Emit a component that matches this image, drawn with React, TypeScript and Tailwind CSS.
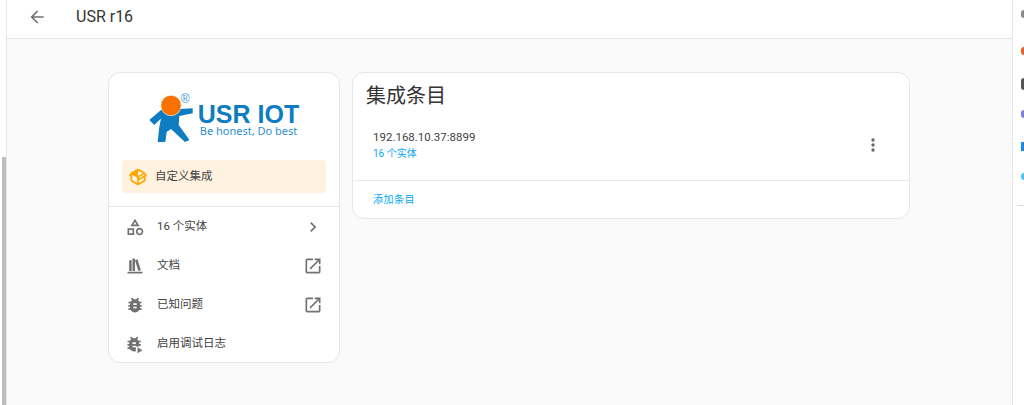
const FONT = "font-['Roboto','Noto_Sans_CJK_SC',sans-serif]";

const Icon = ({ d, className }: { d: string; className: string }) => (
  <svg viewBox="0 0 24 24" className={className} fill="currentColor">
    <path d={d} />
  </svg>
);

const ARROW_LEFT = "M20,11V13H8L13.5,18.5L12.08,19.92L4.16,12L12.08,4.08L13.5,5.5L8,11H20Z";
const PACKAGE = "M2,10.96C1.5,10.68 1.35,10.07 1.63,9.59L3.13,7C3.24,6.8 3.41,6.66 3.6,6.58L11.43,2.18C11.59,2.06 11.79,2 12,2C12.21,2 12.41,2.06 12.57,2.18L20.47,6.62C20.66,6.72 20.82,6.88 20.91,7.08L22.36,9.6C22.64,10.08 22.47,10.69 22,10.96L21,11.54V16.5C21,16.88 20.79,17.21 20.47,17.38L12.57,21.82C12.41,21.94 12.21,22 12,22C11.79,22 11.59,21.94 11.43,21.82L3.53,17.38C3.21,17.21 3,16.88 3,16.5V10.96C2.7,11.13 2.32,11.14 2,10.96M12,4.15V4.15L12,10.85V10.85L17.96,7.5L12,4.15M5,15.91L11,19.29V12.58L5,9.21V15.91M19,15.91V12.69L14,15.59C13.67,15.77 13.3,15.76 13,15.6V19.29L19,15.91M13.85,13.36L20.13,9.73L19.55,8.72L13.27,12.35L13.85,13.36Z";
const SHAPE = "M11,13.5V21.5H3V13.5H11M9,15.5H5V19.5H9V15.5M12,2L17.5,11H6.5L12,2M12,5.86L10.08,9H13.92L12,5.86M17.5,13C20,13 22,15 22,17.5C22,20 20,22 17.5,22C15,22 13,20 13,17.5C13,15 15,13 17.5,13M17.5,15A2.5,2.5 0 0,0 15,17.5A2.5,2.5 0 0,0 17.5,20A2.5,2.5 0 0,0 20,17.5A2.5,2.5 0 0,0 17.5,15Z";
const BOOKSHELF = "M9 3V18H12V3H9M12 5L16 18L19 17L15 4L12 5M5 5V18H8V5H5M3 19V21H21V19H3Z";
const BUG = "M14,12H10V10H14M14,16H10V14H14M20,8H17.19C16.74,7.22 16.12,6.55 15.37,6.04L17,4.41L15.59,3L13.42,5.17C12.96,5.06 12.5,5 12,5C11.5,5 11.04,5.06 10.59,5.17L8.41,3L7,4.41L8.62,6.04C7.88,6.55 7.26,7.22 6.81,8H4V10H6.09C6.04,10.33 6,10.66 6,11V12H4V14H6V15C6,15.34 6.04,15.67 6.09,16H4V18H6.81C7.85,19.79 9.78,21 12,21C14.22,21 16.15,19.79 17.19,18H20V16H17.91C17.96,15.67 18,15.34 18,15V14H20V12H18V11C18,10.66 17.96,10.33 17.91,10H20V8Z";
const BUG_PLAY = "M13,12H9V10H13M13,16H9V14H13M19,8H16.19C15.74,7.22 15.12,6.55 14.37,6.04L16,4.41L14.59,3L12.42,5.17C11.96,5.06 11.5,5 11,5C10.5,5 10.04,5.06 9.59,5.17L7.41,3L6,4.41L7.62,6.04C6.88,6.55 6.26,7.22 5.81,8H3V10H5.09C5.04,10.33 5,10.66 5,11V12H3V14H5V15C5,15.34 5.04,15.67 5.09,16H3V18H5.81C6.85,19.79 8.78,21 11,21C11.7,21 12.37,20.88 13,20.65V15H17V14H19V12H17V11C17,10.66 16.96,10.33 16.91,10H19V8M15,16V23L21,19.5L15,16Z";
const OPEN_NEW = "M14,3V5H17.59L7.76,14.83L9.17,16.24L19,6.41V10H21V3M19,19H5V5H12V3H5C3.89,3 3,3.9 3,5V19A2,2 0 0,0 5,21H19A2,2 0 0,0 21,19V12H19V19Z";
const CHEVRON = "M8.59,16.58L13.17,12L8.59,7.41L10,6L16,12L10,18L8.59,16.58Z";
const DOTS = "M12,16A2,2 0 0,1 14,18A2,2 0 0,1 12,20A2,2 0 0,1 10,18A2,2 0 0,1 12,16M12,10A2,2 0 0,1 14,12A2,2 0 0,1 12,14A2,2 0 0,1 10,12A2,2 0 0,1 12,10M12,4A2,2 0 0,1 14,6A2,2 0 0,1 12,8A2,2 0 0,1 10,6A2,2 0 0,1 12,4Z";

const links = [
  { icon: SHAPE, label: "16 个实体", end: CHEVRON },
  { icon: BOOKSHELF, label: "文档", end: OPEN_NEW },
  { icon: BUG, label: "已知问题", end: OPEN_NEW },
  { icon: BUG_PLAY, label: "启用调试日志" },
];

// only a sliver of each icon of the right sidebar is in the window
const sliverIcons = [
  "mt-[10px] h-[8px] bg-[#8a8a8a] rounded-l",
  "mt-[29px] h-[8px] bg-[#e2622a] rounded-l-sm",
  "mt-[23px] h-[12px] bg-[#555555] rounded-l",
  "mt-[20px] h-[8px] bg-[#7b7fe8] rounded-l-sm",
  "mt-[24px] h-[9px] bg-[#1e88e5]",
  "mt-[22px] h-[7px] bg-[#4fc3f7] rounded-l",
];

const Logo = () => (
  <div className="flex justify-center h-[50px]">
    <svg viewBox="0 0 49 50" className="w-[49px] h-[50px] shrink-0">
      <path fill="#0d7cc1" d="M0.3 25 L12 15 L30 14 L43.7 13.3 L43.7 18.3 L30.3 21 L29.7 30 L40.5 45 L36 47 L22 34 L17.7 37 L16.3 47 L8.7 47 L10.3 32 L12 23.5 L5.3 30 Z" />
      <circle cx="22" cy="10.5" r="10.2" fill="#fb7100" stroke="#ffffff" strokeWidth="0.6" />
    </svg>
    <div className="flex flex-col relative">
      <span className="absolute left-[-17px] top-[-3px] text-[12px] leading-[14px] text-[#3d9bd6] font-['Liberation_Sans',sans-serif]">®</span>
      <span className="mt-[9px] text-[25px] leading-[20px] font-bold text-[#0d7cc1] whitespace-nowrap font-['Liberation_Sans',sans-serif]">USR IOT</span>
      <span className="mt-[2px] ml-[2px] text-[11px] leading-[10px] text-[#2d8fd0] whitespace-nowrap font-['Noto_Sans',sans-serif]">Be honest, Do best</span>
    </div>
  </div>
);

const InfoCard = () => (
  <div className="w-[232px] h-[291px] shrink-0 bg-white rounded-xl border border-[#e6e6e6] flex flex-col">
    <div className="pt-[22px] px-[13px]">
      <Logo />
      <div className="mt-[15px] h-[33px] rounded bg-[#fff3e0] flex items-center pl-[6px] gap-[7px]">
        <Icon d={PACKAGE} className="w-5 h-5 text-[#ffa600]" />
        <span className="text-[11.5px] text-[#424242]">自定义集成</span>
      </div>
    </div>
    <div className="mt-[13px] border-t border-[#e6e6e6] flex flex-col">
      {links.map((link) => (
        <div key={link.label} className="h-[39px] flex items-center pl-[16px] pr-4">
          <Icon d={link.icon} className="w-5 h-5 text-[#727272]" />
          <span className="ml-[12px] flex-1 text-[11.5px] text-[#424242]">{link.label}</span>
          {link.end && <Icon d={link.end} className="w-5 h-5 text-[#727272]" />}
        </div>
      ))}
    </div>
  </div>
);

const EntriesCard = () => (
  <div className="w-[558px] h-[147px] shrink-0 bg-white rounded-xl border border-[#e6e6e6] flex flex-col">
    <h1 className="pl-[13px] pt-[9px] text-[20px] leading-[28px] text-[#333333]">集成条目</h1>
    <div className="h-[70px] pl-5 pr-[26px] flex items-center justify-between">
      <div className="flex flex-col">
        <span className="text-[11.5px] leading-[15px] text-[#424242]">192.168.10.37:8899</span>
        <span className="mt-[2px] text-[10px] leading-[13px] text-[#03a9f4]">16 个实体</span>
      </div>
      <Icon d={DOTS} className="w-5 h-5 text-[#666666]" />
    </div>
    <div className="flex-1 border-t border-[#e9e9e9] pl-5 flex items-center">
      <span className="text-[10px] tracking-[0.5px] text-[#03a9f4]">添加条目</span>
    </div>
  </div>
);

const App = () => {
  return (
    <div className={`w-[1024px] h-[405px] overflow-hidden flex bg-white ${FONT}`}>
      {/* scrollbar of the left nav */}
      <div className="w-[7px] h-full shrink-0 border-r border-[#e6e6e6] pt-[157px] pl-[2px]">
        <div className="w-1 h-full bg-[#bdbdbd]" />
      </div>

      <div className="flex-1 min-w-0 flex flex-col bg-[#fafafa]">
        <header className="h-[39px] shrink-0 bg-white border-b border-[#e6e6e6] flex items-center pl-[20px] pb-[5px]">
          <Icon d={ARROW_LEFT} className="w-5 h-5 text-[#727272]" />
          <span className="ml-[29px] text-[16px] text-[#333333]">USR r16</span>
        </header>
        <main className="flex items-start gap-3 pt-[33px] pl-[101px]">
          <InfoCard />
          <EntriesCard />
        </main>
      </div>

      {/* clipped edge of the right sidebar */}
      <div className="w-[12px] shrink-0 border-l border-[#e6e6e6] bg-white flex flex-col pl-[8px]">
        {sliverIcons.map((cls) => (
          <div key={cls} className={cls} />
        ))}
        <div className="mt-[25px] ml-[-4px] h-px bg-[#d8d8d8]" />
      </div>
    </div>
  );
};

export default App;
